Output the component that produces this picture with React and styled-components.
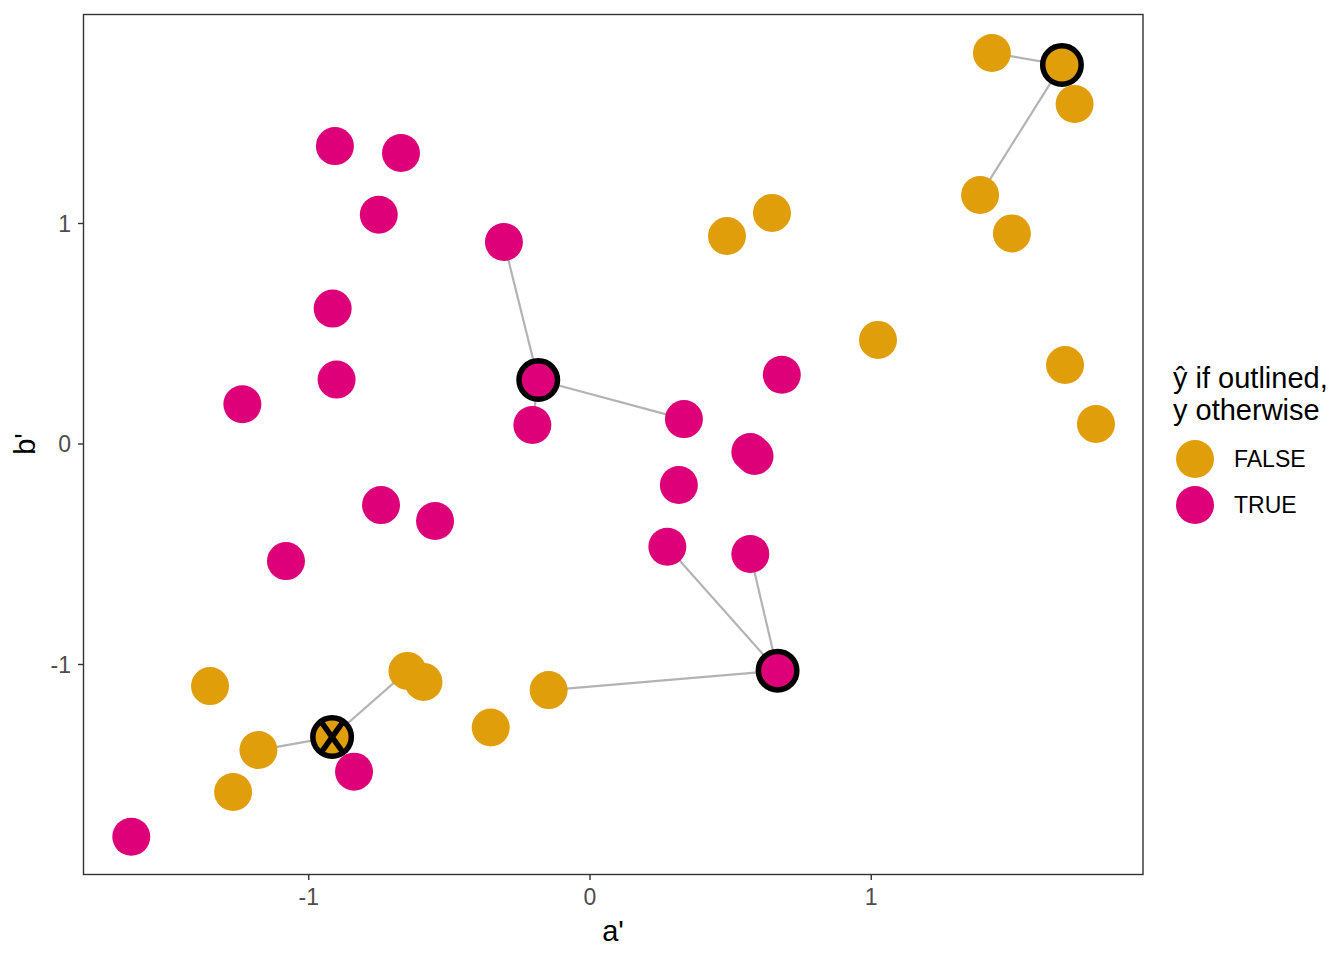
import React from 'react';
import styled, { createGlobalStyle } from 'styled-components';

const ORANGE = '#E09E0B';
const MAGENTA = '#DE0079';

// panel geometry (px) and the data -> px mapping
const PANEL = { left: 83.5, top: 14.5, right: 1143, bottom: 874.5 };
const sx = (v) => 590 + v * 281.25;
const sy = (v) => 444 - v * 220.5;

// a', b', label
const points = [
  { a: 1.429, b: 1.773, y: false },
  { a: 1.678, b: 1.719, y: false, outlined: true },
  { a: 1.723, b: 1.542, y: false },
  { a: 1.387, b: 1.129, y: false },
  { a: 1.5, b: 0.955, y: false },
  { a: 0.647, b: 1.048, y: false },
  { a: 0.487, b: 0.943, y: false },
  { a: 1.024, b: 0.472, y: false },
  { a: 1.689, b: 0.358, y: false },
  { a: 1.799, b: 0.091, y: false },
  { a: -1.351, b: -1.098, y: false },
  { a: -0.649, b: -1.029, y: false },
  { a: -0.592, b: -1.079, y: false },
  { a: -0.147, b: -1.116, y: false },
  { a: -0.353, b: -1.286, y: false },
  { a: -1.179, b: -1.388, y: false },
  { a: -1.269, b: -1.578, y: false },
  { a: -0.917, b: -1.329, y: false, outlined: true, wrong: true },
  { a: -0.907, b: 1.351, y: true },
  { a: -0.672, b: 1.32, y: true },
  { a: -0.751, b: 1.04, y: true },
  { a: -0.306, b: 0.916, y: true },
  { a: -0.915, b: 0.614, y: true },
  { a: -0.901, b: 0.292, y: true },
  { a: -1.236, b: 0.18, y: true },
  { a: -0.184, b: 0.29, y: true, outlined: true },
  { a: -0.205, b: 0.086, y: true },
  { a: 0.334, b: 0.113, y: true },
  { a: 0.682, b: 0.314, y: true },
  { a: 0.57, b: -0.036, y: true },
  { a: 0.585, b: -0.054, y: true },
  { a: 0.316, b: -0.186, y: true },
  { a: -0.743, b: -0.277, y: true },
  { a: -0.551, b: -0.349, y: true },
  { a: -1.081, b: -0.531, y: true },
  { a: 0.275, b: -0.466, y: true },
  { a: 0.57, b: -0.499, y: true },
  { a: 0.667, b: -1.028, y: true, outlined: true },
  { a: -0.839, b: -1.486, y: true },
  { a: -1.631, b: -1.781, y: true },
];

// nearest neighbours of each outlined point
const links = [
  [[1.678, 1.719], [1.429, 1.773]],
  [[1.678, 1.719], [1.387, 1.129]],
  [[1.678, 1.719], [1.723, 1.542]],
  [[-0.184, 0.29], [-0.306, 0.916]],
  [[-0.184, 0.29], [0.334, 0.113]],
  [[-0.184, 0.29], [-0.205, 0.086]],
  [[0.667, -1.028], [0.275, -0.466]],
  [[0.667, -1.028], [0.57, -0.499]],
  [[0.667, -1.028], [-0.147, -1.116]],
  [[-0.917, -1.329], [-1.179, -1.388]],
  [[-0.917, -1.329], [-0.649, -1.029]],
];

const xTicks = [-1, 0, 1];
const yTicks = [1, 0, -1];

const GlobalStyle = createGlobalStyle`
  html, body {
    margin: 0;
    padding: 0;
    background: #ffffff;
  }
  body {
    font-family: "Liberation Sans", Arial, sans-serif;
  }
`;

const Figure = styled.div`
  display: flex;
  width: 1344px;
  height: 960px;
  background: #ffffff;
  overflow: hidden;
`;

const Chart = styled.svg`
  display: block;
  flex: none;
  width: 1150px;
  height: 960px;
`;

const TickLabel = styled.text`
  font-family: "Liberation Sans", Arial, sans-serif;
  font-size: 23px;
  fill: #4d4d4d;
`;

const AxisTitle = styled.text`
  font-family: "Liberation Sans", Arial, sans-serif;
  font-size: 29px;
  fill: #000000;
`;

const Legend = styled.div`
  display: flex;
  flex-direction: column;
  justify-content: center;
  height: 890px;
  padding-left: 23px;
`;

const LegendTitle = styled.div`
  font-size: 29px;
  line-height: 32px;
  color: #000000;
  white-space: nowrap;
  margin-bottom: 10px;
`;

const Key = styled.div`
  display: flex;
  align-items: center;
  height: 46px;
`;

const Swatch = styled.span`
  display: flex;
  align-items: center;
  justify-content: center;
  width: 44px;
  height: 46px;

  &::before {
    content: '';
    width: 38px;
    height: 38px;
    border-radius: 50%;
    background: ${(p) => p.$color};
  }
`;

const KeyLabel = styled.span`
  margin-left: 17px;
  font-size: 23px;
  color: #000000;
`;

function Point({ p }) {
  const cx = sx(p.a);
  const cy = sy(p.b);
  const fill = p.y ? MAGENTA : ORANGE;
  if (!p.outlined) return <circle cx={cx} cy={cy} r={19} fill={fill} />;
  return <circle cx={cx} cy={cy} r={19.25} fill={fill} stroke="#000" strokeWidth={5.5} />;
}

function Cross({ p }) {
  const cx = sx(p.a);
  const cy = sy(p.b);
  return (
    <g stroke="#000" strokeWidth={5.5}>
      <line x1={cx - 10} y1={cy - 14} x2={cx + 10} y2={cy + 14} />
      <line x1={cx + 10} y1={cy - 14} x2={cx - 10} y2={cy + 14} />
    </g>
  );
}

export default function App() {
  return (
    <Figure>
      <GlobalStyle />
      <Chart viewBox="0 0 1150 960">
        <rect x={0} y={0} width={1150} height={960} fill="#fff" />

        <g stroke="#b3b3b3" strokeWidth={2.2}>
          {links.map(([from, to], i) => (
            <line key={i} x1={sx(from[0])} y1={sy(from[1])} x2={sx(to[0])} y2={sy(to[1])} />
          ))}
        </g>

        {points.map((p, i) => (
          <Point key={i} p={p} />
        ))}
        {points.filter((p) => p.wrong).map((p, i) => (
          <Cross key={i} p={p} />
        ))}

        <rect
          x={PANEL.left}
          y={PANEL.top}
          width={PANEL.right - PANEL.left}
          height={PANEL.bottom - PANEL.top}
          fill="none"
          stroke="#333333"
          strokeWidth={1.4}
        />

        {yTicks.map((t) => (
          <g key={t}>
            <line x1={PANEL.left - 5.5} x2={PANEL.left} y1={sy(t)} y2={sy(t)} stroke="#333" strokeWidth={1.4} />
            <TickLabel x={71} y={sy(t)} textAnchor="end" dominantBaseline="central">
              {t}
            </TickLabel>
          </g>
        ))}

        {xTicks.map((t) => (
          <g key={t}>
            <line x1={sx(t)} x2={sx(t)} y1={PANEL.bottom} y2={PANEL.bottom + 5.5} stroke="#333" strokeWidth={1.4} />
            <TickLabel x={sx(t)} y={905} textAnchor="middle">
              {t}
            </TickLabel>
          </g>
        ))}

        <AxisTitle x={613} y={941} textAnchor="middle">a'</AxisTitle>
        <AxisTitle x={35} y={444} textAnchor="middle" transform="rotate(-90 35 444)">
          b'
        </AxisTitle>
      </Chart>

      <Legend>
        <LegendTitle>
          ŷ if outlined,
          <br />
          y otherwise
        </LegendTitle>
        <Key>
          <Swatch $color={ORANGE} />
          <KeyLabel>FALSE</KeyLabel>
        </Key>
        <Key>
          <Swatch $color={MAGENTA} />
          <KeyLabel>TRUE</KeyLabel>
        </Key>
      </Legend>
    </Figure>
  );
}
